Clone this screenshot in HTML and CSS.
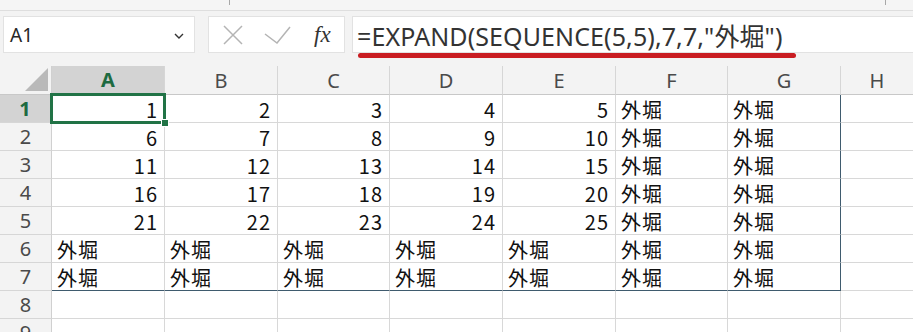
FILE: index.html
```html
<!DOCTYPE html>
<html lang="ja">
<head>
<meta charset="utf-8">
<link rel="stylesheet" href="styles.css">
</head>
<body>
<div class="app">
  <div class="ribbon-edge">
    <span class="tick tick-a"></span>
    <span class="tick tick-b"></span>
  </div>
  <div class="fbar">
    <div class="namebox">
      <span class="name">A1</span>
      <svg class="chev" width="10" height="6" viewBox="0 0 10 6"><path d="M1 1 L5 5 L9 1" fill="none" stroke="#333" stroke-width="1.4"/></svg>
    </div>
    <div class="btnbox">
      <svg class="ico" width="22" height="20" viewBox="0 0 22 20"><path d="M2 1 L20 19 M20 1 L2 19" stroke="#b4b4b4" stroke-width="1.5" fill="none"/></svg>
      <svg class="ico" width="27" height="18" viewBox="0 0 27 18"><path d="M1 8 L13 17 L26 1" stroke="#b4b4b4" stroke-width="1.5" fill="none"/></svg>
      <span class="fx">fx</span>
    </div>
    <div class="formula">
      <span class="ftext">=EXPAND(SEQUENCE(5,5),7,7,"外堀")</span>
      <span class="redline"></span>
    </div>
  </div>
  <div class="sheet">
    <div class="row hdr">
      <div class="corner"><span class="tri"></span></div>
      <div class="ch sel">A</div><div class="ch">B</div><div class="ch">C</div><div class="ch">D</div><div class="ch">E</div><div class="ch">F</div><div class="ch">G</div><div class="ch last">H</div>
    </div>
    <div class="row">
      <div class="rh sel">1</div>
      <div class="c n active">1<span class="selbox"></span><span class="handle"></span></div><div class="c n">2</div><div class="c n">3</div><div class="c n">4</div><div class="c n">5</div><div class="c">外堀</div><div class="c sr">外堀</div><div class="c last"></div>
    </div>
    <div class="row">
      <div class="rh">2</div>
      <div class="c n">6</div><div class="c n">7</div><div class="c n">8</div><div class="c n">9</div><div class="c n">10</div><div class="c">外堀</div><div class="c sr">外堀</div><div class="c last"></div>
    </div>
    <div class="row">
      <div class="rh">3</div>
      <div class="c n">11</div><div class="c n">12</div><div class="c n">13</div><div class="c n">14</div><div class="c n">15</div><div class="c">外堀</div><div class="c sr">外堀</div><div class="c last"></div>
    </div>
    <div class="row">
      <div class="rh">4</div>
      <div class="c n">16</div><div class="c n">17</div><div class="c n">18</div><div class="c n">19</div><div class="c n">20</div><div class="c">外堀</div><div class="c sr">外堀</div><div class="c last"></div>
    </div>
    <div class="row">
      <div class="rh">5</div>
      <div class="c n">21</div><div class="c n">22</div><div class="c n">23</div><div class="c n">24</div><div class="c n">25</div><div class="c">外堀</div><div class="c sr">外堀</div><div class="c last"></div>
    </div>
    <div class="row">
      <div class="rh">6</div>
      <div class="c">外堀</div><div class="c">外堀</div><div class="c">外堀</div><div class="c">外堀</div><div class="c">外堀</div><div class="c">外堀</div><div class="c sr">外堀</div><div class="c last"></div>
    </div>
    <div class="row">
      <div class="rh">7</div>
      <div class="c sb">外堀</div><div class="c sb">外堀</div><div class="c sb">外堀</div><div class="c sb">外堀</div><div class="c sb">外堀</div><div class="c sb">外堀</div><div class="c sb sr">外堀</div><div class="c last"></div>
    </div>
    <div class="row">
      <div class="rh">8</div>
      <div class="c"></div><div class="c"></div><div class="c"></div><div class="c"></div><div class="c"></div><div class="c"></div><div class="c"></div><div class="c last"></div>
    </div>
    <div class="row">
      <div class="rh">9</div>
      <div class="c"></div><div class="c"></div><div class="c"></div><div class="c"></div><div class="c"></div><div class="c"></div><div class="c"></div><div class="c last"></div>
    </div>
  </div>
</div>
</body>
</html>
```
FILE: styles.css
```css
* { box-sizing: border-box; }
html, body { margin: 0; padding: 0; background: #fff; }
body { width: 913px; height: 332px; overflow: hidden; font-family: "Noto Sans", "Noto Sans CJK JP", sans-serif; }
.app { width: 913px; }

.ribbon-edge {
  height: 11px;
  background: #f5f5f5;
  border-bottom: 1px solid #dedede;
  position: relative;
}
.tick { position: absolute; top: 0; width: 1px; height: 5px; background: #a8a8a8; }
.tick-a { left: 229px; }
.tick-b { left: 885px; }

.fbar {
  height: 55px;
  background: #f3f3f3;
  display: flex;
  align-items: flex-start;
  padding: 5px 0 0 3px;
}
.namebox {
  width: 192px;
  height: 37px;
  background: #fff;
  border: 1px solid #e2e2e2;
  display: flex;
  align-items: center;
  justify-content: space-between;
  padding: 0 10px 0 6px;
}
.name { font-size: 19px; color: #262626; }
.chev { margin-top: 2px; }
.btnbox {
  margin-left: 13px;
  width: 137px;
  height: 37px;
  background: #fff;
  border: 1px solid #e2e2e2;
  display: flex;
  align-items: center;
  padding: 0 0 0 13px;
  gap: 20px;
}
.fx {
  font-family: "Liberation Serif", "DejaVu Serif", serif;
  font-style: italic;
  font-size: 23px;
  color: #333;
  margin-left: 3px;
}
.formula {
  margin-left: 7px;
  flex: 1;
  height: 37px;
  background: #fff;
  border: 1px solid #e2e2e2;
  border-right: none;
  position: relative;
  display: flex;
  align-items: center;
  padding-left: 4px;
}
.ftext { font-size: 25px; color: #333; white-space: nowrap; letter-spacing: 0.1px; }
.redline {
  position: absolute;
  left: 5px;
  top: 36px;
  width: 438px;
  height: 5px;
  border-radius: 3px;
  background: #c91d22;
}

.sheet { display: flex; flex-direction: column; }
.row {
  display: grid;
  grid-template-columns: 52px 113px 113px 112px 113px 113px 112px 113px 1fr;
  height: 28px;
}
.row.hdr { height: 29px; }
.corner {
  background: #f3f3f3;
  border-right: 1px solid #d0d0d0;
  border-bottom: 1px solid #c8c8c8;
  position: relative;
}
.tri {
  position: absolute;
  right: 3px;
  bottom: 3px;
  width: 0; height: 0;
  border-style: solid;
  border-width: 0 0 23px 23px;
  border-color: transparent transparent #b9b9b9 transparent;
}
.ch {
  background: #f3f3f3;
  border-right: 1px solid #d6d6d6;
  border-bottom: 1px solid #c8c8c8;
  display: flex;
  align-items: center;
  justify-content: center;
  font-size: 20px;
  color: #4a4a4a;
}
.ch.last { border-right: none; }
.ch.sel {
  background: #d3d3d3;
  color: #1e6b41;
  font-weight: 700;
  border-bottom: 2px solid #217346;
}
.rh {
  background: #f3f3f3;
  border-right: 1px solid #d0d0d0;
  border-bottom: 1px solid #d6d6d6;
  display: flex;
  align-items: center;
  justify-content: center;
  font-size: 20px;
  color: #4a4a4a;
}
.rh.sel {
  background: #d3d3d3;
  color: #1e6b41;
  font-weight: 700;
  border-right: 2px solid #217346;
}
.c {
  border-right: 1px solid #d8d8d8;
  border-bottom: 1px solid #d8d8d8;
  font-family: "Noto Sans CJK JP", sans-serif;
  font-size: 20px;
  color: #111;
  display: flex;
  align-items: center;
  padding: 3px 5px 0;
  line-height: 1;
  white-space: nowrap;
  letter-spacing: 1px;
}
.c.n { justify-content: flex-end; padding-right: 6px; letter-spacing: 1px; }
.c.last { border-right: none; }
.c.sr { border-right: 1px solid #3f5b6e; }
.c.sb { border-bottom: 1px solid #3f5b6e; }
.c.active { position: relative; }
.selbox {
  position: absolute;
  left: -2px; top: -2px; right: -2px; bottom: -2px;
  border: 3px solid #217346;
  pointer-events: none;
}
.handle {
  position: absolute;
  right: -5px;
  bottom: -5px;
  width: 8px;
  height: 8px;
  background: #217346;
  border: 1px solid #fff;
}
```
